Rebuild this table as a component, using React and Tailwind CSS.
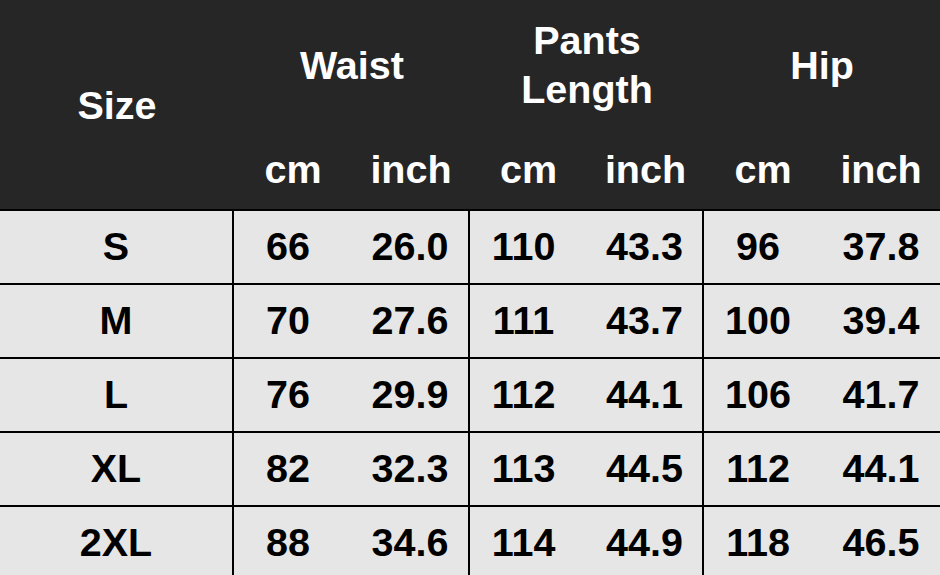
const rows = [
  ['S', '66', '26.0', '110', '43.3', '96', '37.8'],
  ['M', '70', '27.6', '111', '43.7', '100', '39.4'],
  ['L', '76', '29.9', '112', '44.1', '106', '41.7'],
  ['XL', '82', '32.3', '113', '44.5', '112', '44.1'],
  ['2XL', '88', '34.6', '114', '44.9', '118', '46.5'],
];

const cols = 'grid grid-cols-[234px_118px_118px_117px_117px_118px_118px]';

export default function App() {
  return (
    <div className="w-[940px] h-[575px] overflow-hidden bg-[#e6e6e6] font-['Liberation_Sans',Arial,sans-serif] font-bold text-[39.5px] leading-none">
      {/* header */}
      <div className="bg-[#262626] text-white h-[209px] flex">
        <div className="w-[234px] flex items-center justify-center pt-[2px]">Size</div>
        <div className="flex-1 flex flex-col">
          <div className="h-[132px] grid grid-cols-[236px_234px_236px]">
            <div className="flex items-center justify-center">Waist</div>
            <div className="flex flex-col items-center justify-center leading-[49px] pb-[2px]">
              <span>Pants</span>
              <span>Length</span>
            </div>
            <div className="flex items-center justify-center">Hip</div>
          </div>
          <div className="flex-1 grid grid-cols-[118px_118px_117px_117px_118px_118px]">
            {['cm', 'inch', 'cm', 'inch', 'cm', 'inch'].map((u, i) => (
              <div key={i} className="flex items-center justify-center pb-[2px]">{u}</div>
            ))}
          </div>
        </div>
      </div>

      {/* body */}
      {rows.map((r) => (
        <div key={r[0]} className={`${cols} h-[74px] border-t-2 border-black text-black`}>
          <div className="flex items-center justify-center border-r-2 border-black">{r[0]}</div>
          <div className="flex items-center justify-center pr-[10px]">{r[1]}</div>
          <div className="flex items-center justify-center border-r-2 border-black">{r[2]}</div>
          <div className="flex items-center justify-center pr-[10px]">{r[3]}</div>
          <div className="flex items-center justify-center border-r-2 border-black">{r[4]}</div>
          <div className="flex items-center justify-center pr-[10px]">{r[5]}</div>
          <div className="flex items-center justify-center">{r[6]}</div>
        </div>
      ))}
    </div>
  );
}
